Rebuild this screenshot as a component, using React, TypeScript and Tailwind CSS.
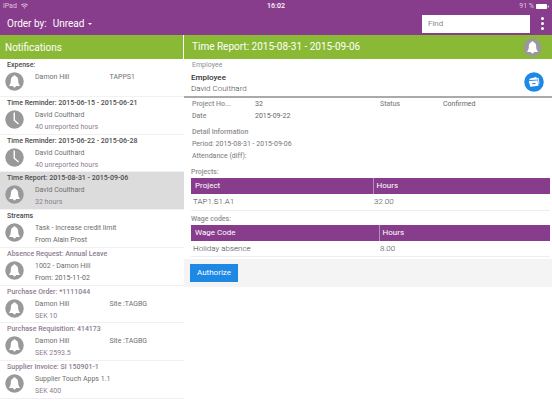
import { useState } from "react";

type Notification = {
  title: string;
  icon: "bell" | "clock";
  name: string;
  extra?: string;
  detail?: string;
  titleClass: string;
  detailClass?: string;
};

const notifications: Notification[] = [
  { title: "Expense:", icon: "bell", name: "Damon Hill", extra: "TAPPS1", titleClass: "text-[#4c4c4c]" },
  { title: "Time Reminder: 2015-06-15 - 2015-06-21", icon: "clock", name: "David Coulthard", detail: "40 unreported hours", titleClass: "text-[#4c4c4c]" },
  { title: "Time Reminder: 2015-06-22 - 2015-06-28", icon: "clock", name: "David Coulthard", detail: "40 unreported hours", titleClass: "text-[#4c4c4c]" },
  { title: "Time Report: 2015-08-31 - 2015-09-06", icon: "bell", name: "David Coulthard", detail: "32 hours", titleClass: "text-[#4c4c4c]" },
  { title: "Streams", icon: "bell", name: "Task - Increase credit limit", detail: "From Alain Prost", titleClass: "text-[#4c4c4c]", detailClass: "text-[#666]" },
  { title: "Absence Request: Annual Leave", icon: "bell", name: "1002 - Damon Hill", detail: "From: 2015-11-02", titleClass: "text-[#8d7d91]", detailClass: "text-[#666]" },
  { title: "Purchase Order: *1111044", icon: "bell", name: "Damon Hill", extra: "Site :TAGBG", detail: "SEK 10", titleClass: "text-[#8d7d91]" },
  { title: "Purchase Requisition: 414173", icon: "bell", name: "Damon Hill", extra: "Site :TAGBG", detail: "SEK 2593.5", titleClass: "text-[#8d7d91]" },
  { title: "Supplier Invoice: SI 150901-1", icon: "bell", name: "Supplier Touch Apps 1.1", detail: "SEK 400", titleClass: "text-[#8d7d91]" },
];

function BellIcon() {
  return (
    <svg viewBox="0 0 38 38" className="size-[19px] shrink-0" aria-hidden="true">
      <circle cx="19" cy="19" r="18.500" fill="#999" />
      <path
        fill="#fff"
        d="M19 6.500c-1.400 0-2.200.8-2.400 2-3 .9-4.600 3.500-4.800 7-.3 5-.6 8.500-3.300 11v1.500h7.500c.2 1.800 1.400 2.800 3 2.800s2.800-1 3-2.800h7.500v-1.500c-2.700-2.500-3-6-3.300-11-.2-3.500-1.800-6.100-4.800-7-.2-1.200-1-2-2.400-2z"
      />
    </svg>
  );
}

function ClockIcon() {
  return (
    <svg viewBox="0 0 38 38" className="size-[19px] shrink-0" aria-hidden="true">
      <circle cx="19" cy="19" r="18.500" fill="#999" />
      <path d="M18.500 5v15.500l8.500 7.500" fill="none" stroke="#fff" strokeWidth="2.800" />
    </svg>
  );
}

function DocumentsIcon() {
  return (
    <svg viewBox="0 0 40 40" className="size-5" aria-hidden="true">
      <circle cx="20" cy="20" r="19.500" fill="#1e88e5" />
      <path d="M13 13.500l11-4 1.500 2.500 4-.5 1.500 12-2 1.500-1.500-9.500z" fill="#d4e8fb" />
      <path d="M10 16.500l2-3.500 13.500-1 1 3.500z" fill="#fff" />
      <path d="M9.500 18l17.500-1.500 2 11-16.500 2z" fill="#fff" />
      <path d="M10 17.200l17-1.500" stroke="#1e88e5" strokeWidth="1" />
      <path d="M16 22.500l7-.7.3 2.200-7 .7z" fill="#1e88e5" />
    </svg>
  );
}

function StatusBar() {
  return (
    <div className="grid h-3 grid-cols-3 items-center px-[3px] text-[7px] leading-3">
      <div className="flex items-center gap-1 text-[#dcc6df]">
        <span>iPad</span>
        <svg viewBox="0 0 14 11" className="h-[6px] w-[7px]" fill="none" stroke="currentColor" strokeWidth="2.200" aria-hidden="true">
          <path d="M.8 4a9 9 0 0 1 12.400 0M3.300 6.800a5.400 5.400 0 0 1 7.400 0" />
          <path d="M7 8l1.600 1.200L7 11 5.400 9.200z" fill="currentColor" stroke="none" />
        </svg>
      </div>
      <span className="text-center font-medium">16:02</span>
      <div className="flex items-center justify-end gap-0.5">
        <span className="text-[#dcc6df]">91 %</span>
        <svg viewBox="0 0 26 10" className="h-[5px] w-[13px]" fill="#fff" aria-hidden="true">
          <rect width="22" height="10" rx="1.500" />
          <rect x="23.500" y="3" width="2" height="4" rx="1" />
        </svg>
      </div>
    </div>
  );
}

function EntryTable({ column, name, hours, widthClass }: { column: string; name: string; hours: string; widthClass: string }) {
  return (
    <table className="w-full table-fixed border-collapse text-left">
      <thead>
        <tr className="h-4 bg-[#883d8c] text-[8px] leading-4 text-white">
          <th className={`${widthClass} border-r border-[#b88abb] pl-1 font-normal`}>{column}</th>
          <th className="pl-[3px] font-normal">Hours</th>
        </tr>
      </thead>
      <tbody>
        <tr className="h-4 border-b border-[#eee] text-[8px] leading-[15px] font-light text-[#444]">
          <td className="pl-0.5">{name}</td>
          <td className="pl-px">{hours}</td>
        </tr>
      </tbody>
    </table>
  );
}

export default function App() {
  const [selected, setSelected] = useState(3);
  const [query, setQuery] = useState("");

  return (
    <div className="flex min-h-screen flex-col bg-white font-[Roboto,sans-serif]">
      <header className="bg-[#883d8c] text-white">
        <StatusBar />
        <div className="flex h-[23px] items-center pl-[7px]">
          <button type="button" className="flex items-center text-[10px]">
            <span className="mr-1.5">Order by:</span>
            <span>Unread</span>
            <svg viewBox="0 0 8 4" className="ml-1 h-0.5 w-1" fill="#fff" aria-hidden="true">
              <path d="M0 0h8L4 4z" />
            </svg>
          </button>
          <input
            type="text"
            aria-label="Find"
            placeholder="Find"
            value={query}
            onChange={(e) => setQuery(e.target.value)}
            className="ml-auto h-[18px] w-[108px] bg-white px-1.5 text-[8px] text-[#555] placeholder:text-[#888] focus:outline-none"
          />
          <button type="button" aria-label="Menu" className="flex w-[22px] flex-col items-center gap-0.5 pl-0.5">
            <span className="size-[3px] rounded-full bg-white" />
            <span className="size-[3px] rounded-full bg-white" />
            <span className="size-[3px] rounded-full bg-white" />
          </button>
        </div>
      </header>

      <div className="flex flex-1">
        <aside className="w-1/3">
          <h1 className="h-6 border-r border-white bg-[#8aba35] pl-[5px] text-[10px] leading-[25px] text-white">Notifications</h1>
          <ul className="grid min-h-[340px] auto-rows-fr">
            {notifications.map((n, i) => (
              <li key={n.title} className={`border-b border-[#f1f1f1] ${i === selected ? "bg-[#dcdcdc]" : "bg-white"}`}>
                <button type="button" onClick={() => setSelected(i)} className="block w-full pt-px pl-[7px] text-left text-[7px] leading-3">
                  <span className={`block leading-[11px] font-medium ${n.titleClass}`}>{n.title}</span>
                  <span className="-ml-0.5 flex items-start gap-[11px]">
                    <span className="pt-px">{n.icon === "bell" ? <BellIcon /> : <ClockIcon />}</span>
                    <span className="grid flex-1 grid-cols-2 text-[#707070]">
                      <span className="whitespace-nowrap">{n.name}</span>
                      <span className="whitespace-nowrap">{n.extra}</span>
                      <span className={`whitespace-nowrap ${n.detailClass ?? "text-[#8d7d91]"}`}>{n.detail}</span>
                    </span>
                  </span>
                </button>
              </li>
            ))}
          </ul>
        </aside>

        <main className="flex-1 text-[7px] leading-3 text-[#666]">
          <div className="flex h-6 items-center justify-between bg-[#8aba35] pr-[10px] pl-2 text-[10px] text-white">
            <h2>Time Report: 2015-08-31 - 2015-09-06</h2>
            <BellIcon />
          </div>

          <section className="flex h-[39px] items-end justify-between border-b-2 border-[#a9aaa9] pr-2 pl-[7px]">
            <div className="self-start text-[8px]">
              <p className="pl-px text-[7px] leading-3 text-[#8e8e8e]">Employee</p>
              <p className="pt-px font-medium text-[#333]">Employee</p>
              <p className="leading-[10px] font-light text-[#444]">David Coulthard</p>
            </div>
            <button type="button" aria-label="Documents" className="mb-1">
              <DocumentsIcon />
            </button>
          </section>

          <dl className="grid grid-cols-[63px_125px_63px_1fr] pl-2">
            <dt className="font-medium text-[#8e8e8e]">Project Ho...</dt>
            <dd>32</dd>
            <dt className="font-medium text-[#8e8e8e]">Status</dt>
            <dd>Confirmed</dd>
            <dt className="font-medium text-[#8e8e8e]">Date</dt>
            <dd>2015-09-22</dd>
          </dl>

          <section className="pt-1 pl-2">
            <h3 className="font-medium text-[#8e8e8e]">Detail Information</h3>
            <p className="text-[#777]">Period: 2015-08-31 - 2015-09-06</p>
            <p className="text-[#777]">Attendance (diff):</p>
          </section>

          <section className="pt-[5px] pr-0.5 pl-[7px]">
            <h3 className="leading-[11px] font-medium text-[#8e8e8e]">Projects:</h3>
            <EntryTable column="Project" name="TAP1.S1.A1" hours="32.00" widthClass="w-[182px]" />
          </section>
          <section className="pt-[3px] pr-0.5 pl-[7px]">
            <h3 className="leading-[11px] font-medium text-[#8e8e8e]">Wage codes:</h3>
            <EntryTable column="Wage Code" name="Holiday absence" hours="8.00" widthClass="w-[188px]" />
          </section>

          <div className="mt-0.5 bg-[#f4f4f4] px-1.5 py-[5px]">
            <button type="button" className="block h-[18px] bg-[#1e88e5] px-[7px] text-[8px] leading-[18px] text-white">
              Authorize
            </button>
          </div>
        </main>
      </div>
    </div>
  );
}
